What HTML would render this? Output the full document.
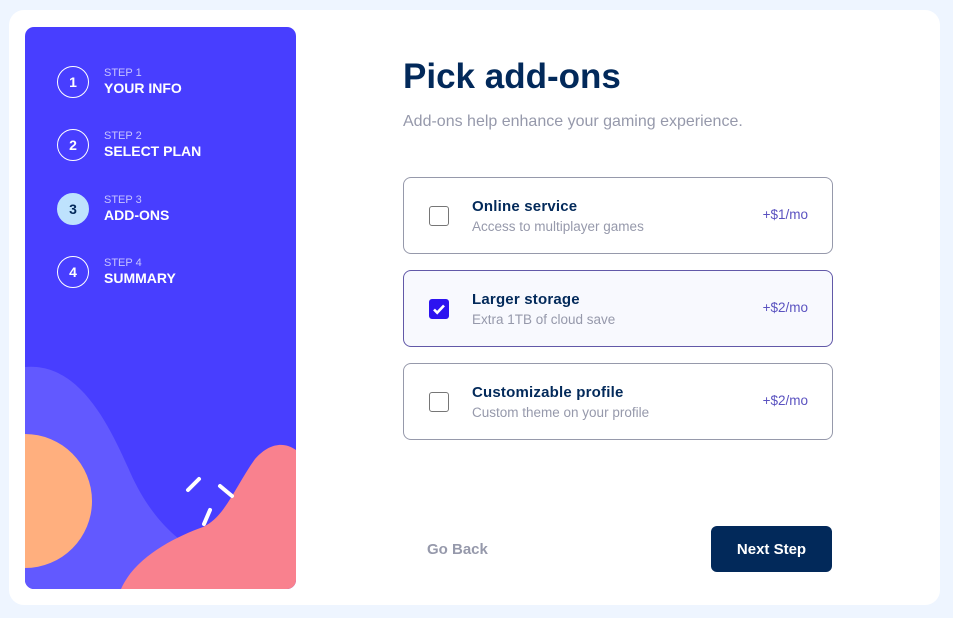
<!DOCTYPE html>
<html><head><style>
*{margin:0;padding:0;box-sizing:border-box}
body{width:953px;height:618px;background:#eef5ff;font-family:"Liberation Sans",sans-serif;position:relative;overflow:hidden}
.card{position:absolute;left:9px;top:10px;width:931px;height:595px;background:#fff;border-radius:15px}
.side{position:absolute;left:25px;top:27px;width:271px;height:562px;background:#483eff;border-radius:9px;overflow:hidden}
.step{position:absolute;left:32px;display:flex;align-items:center}
.num{width:32px;height:32px;border-radius:50%;border:1px solid #fff;color:#fff;font-weight:bold;font-size:14px;display:flex;align-items:center;justify-content:center}
.num.act{background:#bee2fd;border-color:#bee2fd;color:#02295a}
.lbl{margin-left:15px}
.lbl small{display:block;color:#c7c4ff;font-size:11px;line-height:13px}
.lbl b{display:block;color:#fff;font-size:14px;line-height:17px}
h1{position:absolute;left:403px;top:57px;font-size:35px;color:#02295a;font-weight:bold}
.sub{position:absolute;left:403px;top:113px;font-size:16px;color:#9699ab}
.opt{position:absolute;left:403px;width:430px;height:77px;border:1px solid #9699ab;border-radius:8px}
.opt.sel{border-color:#6259a8;background:#f8f9fe}
.cb{position:absolute;left:25px;top:28px;width:20px;height:20px;border:1px solid #767676;border-radius:3px;background:#fff}
.cb.on{background:#2d14f0;border-color:#2d14f0}
.t{position:absolute;left:68px;top:20px}
.t b{display:block;font-size:15px;color:#02295a;letter-spacing:.2px}
.t span{display:block;font-size:13.5px;color:#9699ab;margin-top:4px}
.p{position:absolute;right:24px;top:29px;font-size:13.5px;color:#5a52c0}
.back{position:absolute;left:427px;top:541px;color:#9699ab;font-weight:bold;font-size:15px}
.next{position:absolute;left:711px;top:526px;width:121px;height:46px;background:#02295a;border-radius:6px;color:#fff;font-weight:bold;font-size:15px;display:flex;align-items:center;justify-content:center}
</style></head><body>
<div class="card"></div>
<div class="side">
<svg width="271" height="562" style="position:absolute;left:0;top:0">
<path d="M0,340 C55,335 85,400 105,445 C125,490 150,510 165,520 L165,562 L0,562 Z" fill="#6259ff"/>
<circle cx="0" cy="474" r="67" fill="#ffaf7e"/>
<path d="M96,562 C110,530 150,510 178,500 C200,490 210,460 230,432 C245,415 260,415 271,423 L271,562 Z" fill="#f9818e"/>
<g stroke="#fff" stroke-width="4" stroke-linecap="round">
<line x1="163" y1="463" x2="174" y2="452"/><line x1="195" y1="459" x2="207" y2="469"/><line x1="185" y1="483" x2="179" y2="497"/>
</g>
</svg>
<div class="step" style="top:39px"><div class="num">1</div><div class="lbl"><small>STEP 1</small><b>YOUR INFO</b></div></div>
<div class="step" style="top:102px"><div class="num">2</div><div class="lbl"><small>STEP 2</small><b>SELECT PLAN</b></div></div>
<div class="step" style="top:166px"><div class="num act">3</div><div class="lbl"><small>STEP 3</small><b>ADD-ONS</b></div></div>
<div class="step" style="top:229px"><div class="num">4</div><div class="lbl"><small>STEP 4</small><b>SUMMARY</b></div></div>
</div>
<h1>Pick add-ons</h1>
<div class="sub">Add-ons help enhance your gaming experience.</div>
<div class="opt" style="top:177px"><div class="cb"></div><div class="t"><b>Online service</b><span>Access to multiplayer games</span></div><div class="p">+$1/mo</div></div>
<div class="opt sel" style="top:270px"><div class="cb on"><svg width="18" height="18" viewBox="0 0 18 18"><path d="M4 9.5l3.2 3.2L14 5.5" stroke="#fff" stroke-width="2.6" fill="none"/></svg></div><div class="t"><b>Larger storage</b><span>Extra 1TB of cloud save</span></div><div class="p">+$2/mo</div></div>
<div class="opt" style="top:363px"><div class="cb"></div><div class="t"><b>Customizable profile</b><span>Custom theme on your profile</span></div><div class="p">+$2/mo</div></div>
<div class="back">Go Back</div>
<div class="next">Next Step</div>
</body></html>
